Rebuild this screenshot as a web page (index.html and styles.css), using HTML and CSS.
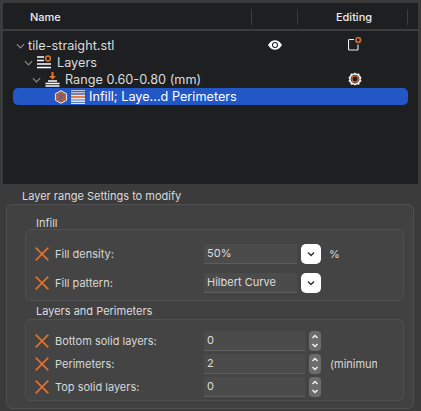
FILE: index.html
```html
<!DOCTYPE html>
<html lang="en">
<head>
  <meta charset="UTF-8">
  <title>Layer range Settings</title>
  <link rel="stylesheet" href="styles.css">
</head>
<body>
  <div class="tree">
    <div class="tree-head">
      <div class="col-name">Name</div>
      <div class="col-eye"></div>
      <div class="col-editing">Editing</div>
      <div class="col-end"></div>
    </div>
    <div class="tree-body">
      <div class="node level-0">
        <svg class="chev" viewBox="0 0 10 6"><path d="M1 1l4 4 4-4"/></svg>
        <span>tile-straight.stl</span>
        <svg class="eye" viewBox="0 0 14 10"><path d="M0 5C2.200 1.500 4.500 .2 7 .2s4.800 1.300 7 4.800C11.800 8.500 9.500 9.800 7 9.800S2.200 8.500 0 5z" fill="#fff"/><circle cx="7" cy="5" r="3" fill="#1e1f21"/><circle cx="7" cy="5" r="2" fill="#fff"/></svg>
        <svg class="edit" viewBox="0 0 14 14"><path d="M6 2.500H1.500a1 1 0 0 0-1 1V12a1 1 0 0 0 1 1H9a1 1 0 0 0 1-1V7.500" fill="none" stroke="#eee" stroke-width="1.100"/><circle cx="10.200" cy="3" r="2.300" fill="none" stroke="#c8692e" stroke-width="1.800"/></svg>
      </div>
      <div class="node level-1">
        <svg class="chev" viewBox="0 0 10 6"><path d="M1 1l4 4 4-4"/></svg>
        <svg class="ico" viewBox="0 0 15 15"><path d="M0 2h7M0 5.500h7M0 9h14M0 12.500h14" stroke="#fff" stroke-width="1.500"/><circle cx="11" cy="3.500" r="2.400" fill="none" stroke="#d9722e" stroke-width="1.500"/></svg>
        <span>Layers</span>
      </div>
      <div class="node level-2">
        <svg class="chev" viewBox="0 0 10 6"><path d="M1 1l4 4 4-4"/></svg>
        <svg class="ico" viewBox="0 0 15 15"><path d="M7.500 0v5" stroke="#e5762c" stroke-width="2"/><path d="M4 4h7L7.500 7.500z" fill="#e5762c"/><path d="M3 9h9M0.500 11.500h14M.5 14h14" stroke="#fff" stroke-width="1.400"/></svg>
        <span>Range 0.60-0.80 (mm)</span>
        <svg class="gear" viewBox="0 0 16 16"><path d="M8 .5l2 1.500 2.800-.2 .6 2.600L15.500 6l-1 2.300 1 2.200-2.100 1.600-.6 2.400-2.800-.2L8 15.500l-2-1.200-2.800.2-.6-2.400L.5 10.500l1-2.200-1-2.300 2.100-1.600 .6-2.600 2.800.2z" fill="#f2f2f2"/><circle cx="8" cy="8" r="5" fill="#1e1f21"/><circle cx="8" cy="8" r="3.600" fill="none" stroke="#c8692e" stroke-width="1.600"/></svg>
      </div>
      <div class="node selected">
        <svg class="hex" viewBox="0 0 14 14"><path d="M7 .7l5.600 3.100v6.400L7 13.300 1.400 10.200V3.800z" fill="#b5603c" stroke="#eee" stroke-width="1"/><path d="M3 4l8 6M11 4l-8 6M7 2v10" stroke="#4a5fa8" stroke-width=".8"/></svg>
        <svg class="stripes" viewBox="0 0 14 14"><rect width="14" height="14" fill="#dfe6f5"/><path d="M0 1.500h14M0 4h14" stroke="#5a5f9a" stroke-width="1.400"/><path d="M0 7h14" stroke="#e5762c" stroke-width="1.800"/><path d="M0 10h14M0 12.500h14" stroke="#5a7cc8" stroke-width="1.200"/></svg>
        <span>Infill; Laye...d Perimeters</span>
      </div>
    </div>
  </div>

  <div class="panel">
    <div class="panel-title">Layer range Settings to modify</div>
    <div class="outer">
      <div class="group-label">Infill</div>
      <div class="group">
        <div class="row">
          <svg class="x" viewBox="0 0 14 14"><path d="M.7 .7l12.600 12.600M13.300 .7L.7 13.300"/></svg>
          <label>Fill density:</label>
          <div class="field short">50%</div>
          <div class="drop"><svg viewBox="0 0 8 6"><path d="M1 1.500l3 3 3-3"/></svg></div>
          <span class="unit">%</span>
        </div>
        <div class="row">
          <svg class="x" viewBox="0 0 14 14"><path d="M.7 .7l12.600 12.600M13.300 .7L.7 13.300"/></svg>
          <label>Fill pattern:</label>
          <div class="field short">Hilbert Curve</div>
          <div class="drop"><svg viewBox="0 0 8 6"><path d="M1 1.500l3 3 3-3"/></svg></div>
        </div>
      </div>
      <div class="group-label second">Layers and Perimeters</div>
      <div class="group tight">
        <div class="row">
          <svg class="x" viewBox="0 0 14 14"><path d="M.7 .7l12.600 12.600M13.300 .7L.7 13.300"/></svg>
          <label>Bottom solid layers:</label>
          <div class="field long">0</div>
          <div class="spin"><svg viewBox="0 0 12 20"><path d="M3.500 7l2.500-2.500L8.500 7M3.500 13l2.500 2.500L8.500 13"/></svg></div>
        </div>
        <div class="row">
          <svg class="x" viewBox="0 0 14 14"><path d="M.7 .7l12.600 12.600M13.300 .7L.7 13.300"/></svg>
          <label>Perimeters:</label>
          <div class="field long">2</div>
          <div class="spin"><svg viewBox="0 0 12 20"><path d="M3.500 7l2.500-2.500L8.500 7M3.500 13l2.500 2.500L8.500 13"/></svg></div>
          <span class="unit clipped">(minimum</span>
        </div>
        <div class="row">
          <svg class="x" viewBox="0 0 14 14"><path d="M.7 .7l12.600 12.600M13.300 .7L.7 13.300"/></svg>
          <label>Top solid layers:</label>
          <div class="field long">0</div>
          <div class="spin"><svg viewBox="0 0 12 20"><path d="M3.500 7l2.500-2.500L8.500 7M3.500 13l2.500 2.500L8.500 13"/></svg></div>
        </div>
      </div>
    </div>
  </div>
</body>
</html>
```

FILE: styles.css
```css
* {
  box-sizing: border-box;
}

body {
  margin: 0;
  width: 421px;
  height: 411px;
  overflow: hidden;
  padding: 3px 3px 0 3px;
  background: #3b3b3b;
  font-family: "Inter", "Liberation Sans", sans-serif;
  color: #e0e0e0;
}

.tree {
  height: 181px;
  background: #1e1f21;
}

.tree-head {
  display: flex;
  height: 28px;
  border-bottom: 2px solid #3c3c3c;
  font-size: 11px;
  font-weight: 500;
  line-height: 28px;
  color: #ececec;
}

.col-name {
  width: 248px;
  padding: 0 0 0 27px;
}

.col-eye {
  width: 47px;
  height: 16px;
  margin-top: 6px;
  border-left: 1px solid #3c3c3c;
  border-right: 1px solid #3c3c3c;
}

.col-editing {
  width: 109px;
  padding-left: 3px;
  text-align: center;
}

.col-end {
  width: 1px;
  height: 16px;
  margin-top: 6px;
  background: #3c3c3c;
}

.tree-body {
  padding-top: 6px;
}

.node {
  position: relative;
  display: flex;
  align-items: center;
  gap: 3px;
  height: 17px;
  font-size: 12.700px;
  color: #dcdcdc;
}

.level-0 {
  padding-left: 13px;
}

.level-1 {
  padding-left: 21px;
}

.level-2 {
  padding-left: 29px;
}

.chev {
  width: 9px;
  height: 6px;
  flex: none;
}

.chev path {
  fill: none;
  stroke: #8c8c8c;
  stroke-width: 1.300;
}

.ico {
  width: 15px;
  height: 15px;
  flex: none;
  margin: 0 2px 0 1px;
}

.eye {
  position: absolute;
  left: 265px;
  top: 3px;
  width: 14px;
  height: 10px;
}

.edit {
  position: absolute;
  left: 345px;
  top: 0;
  width: 14px;
  height: 14px;
}

.gear {
  position: absolute;
  left: 345px;
  top: 1px;
  width: 14px;
  height: 14px;
}

.selected {
  width: 395px;
  margin-left: 10px;
  padding-left: 41px;
  background: #2357c6;
  border-radius: 5px;
  color: #fff;
}

.hex,
.stripes {
  width: 14px;
  height: 14px;
  flex: none;
}

.stripes {
  margin-right: 1px;
}

.panel {
  padding: 5px 0 0 3px;
}

.panel-title {
  padding: 1px 0 0 16px;
  font-size: 11px;
  line-height: 13px;
  color: #dcdcdc;
}

.outer {
  width: 408px;
  height: 205px;
  margin-top: 1px;
  padding: 11px 9px 0 18px;
  border: 1px solid #4f4f4f;
  border-radius: 6px;
  background: #414141;
}

.group-label {
  margin-bottom: -1px;
  padding-left: 11px;
  font-size: 11px;
  line-height: 14px;
  color: #dcdcdc;
}

.group-label.second {
  margin: 3px 0 1px;
}

.group {
  height: 72px;
  padding: 14px 0 0 9px;
  border: 1px solid #505050;
  border-radius: 6px;
  background: #444444;
  display: flex;
  flex-direction: column;
  gap: 9px;
}

.group.tight {
  height: 82px;
  padding-top: 11px;
  gap: 3px;
}

.row {
  display: flex;
  align-items: center;
  height: 20px;
  font-size: 11px;
  color: #d8d8d8;
}

.x {
  width: 14px;
  height: 14px;
  flex: none;
}

.x path {
  fill: none;
  stroke: #e0722e;
  stroke-width: 1.700;
}

label {
  width: 155px;
  padding-left: 6px;
}

.field {
  height: 20px;
  padding-left: 3px;
  line-height: 18px;
  background: #4b4b4b;
  border-bottom: 1px solid #5e5e5e;
  color: #dedede;
}

.short {
  width: 93px;
}

.long {
  width: 101px;
}

.drop {
  display: flex;
  align-items: center;
  justify-content: center;
  width: 20px;
  height: 20px;
  margin-left: 4px;
  background: #fff;
  border-radius: 5px;
}

.drop svg {
  width: 8px;
  height: 6px;
}

.drop path {
  fill: none;
  stroke: #333;
  stroke-width: 1.500;
}

.unit {
  margin-left: 8px;
}

.spin {
  width: 12px;
  height: 20px;
  margin-left: 4px;
  background: #6c6c6c;
  border-radius: 4px;
}

.spin svg {
  display: block;
  width: 12px;
  height: 20px;
}

.spin path {
  fill: none;
  stroke: #f0f0f0;
  stroke-width: 1.500;
}

.clipped {
  width: 47px;
  margin-left: 9px;
  overflow: hidden;
  white-space: nowrap;
}
```
